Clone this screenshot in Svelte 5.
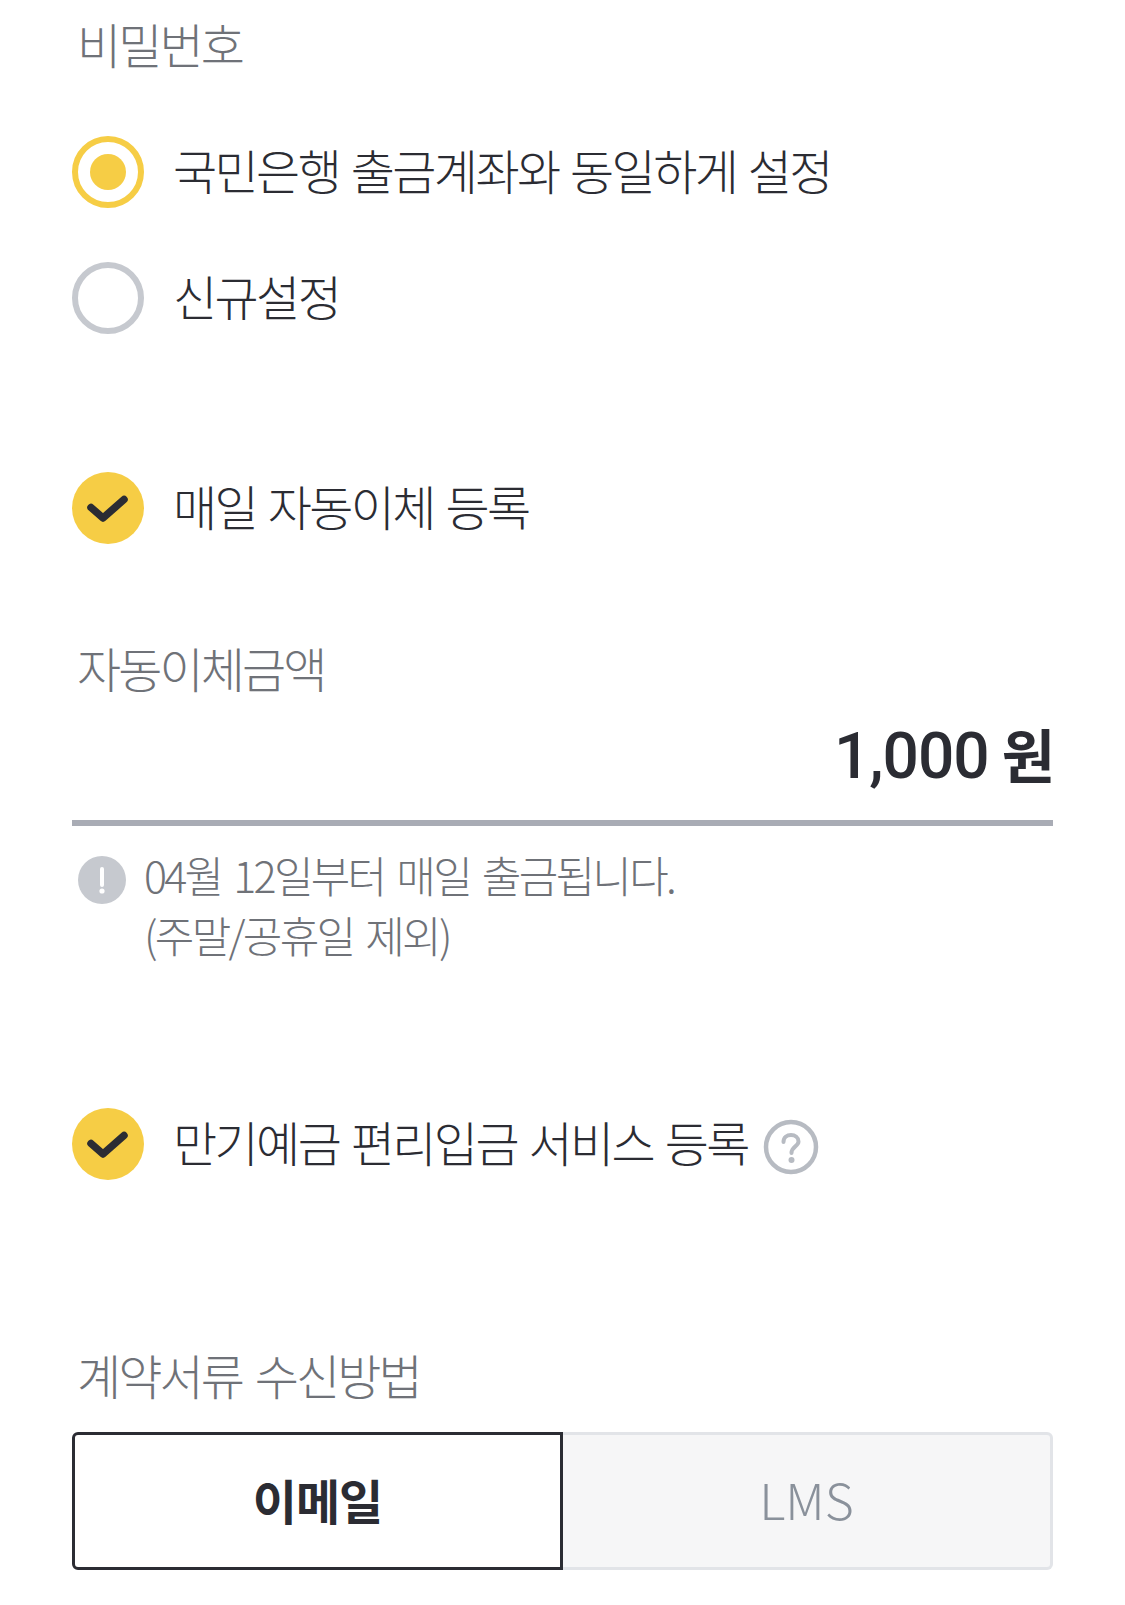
<script>
  const radios = [
    { label: '국민은행 출금계좌와 동일하게 설정', on: true },
    { label: '신규설정', on: false }
  ]
</script>

<div class="page">
  <div class="label pw">비밀번호</div>
  <div class="radios">
    {#each radios as r}
      <div class="row">
        <span class="radio" class:on={r.on}></span>
        <span class="text">{r.label}</span>
      </div>
    {/each}
  </div>

  <div class="row daily">
    <span class="check">
      <svg viewBox="0 0 72 72" width="72" height="72"><path d="M19 35.500 L31 46 L52 27.500" fill="none" stroke="#2b2c33" stroke-width="7.500" stroke-linecap="round" stroke-linejoin="round"/></svg>
    </span>
    <span class="text">매일 자동이체 등록</span>
  </div>

  <div class="label amount-label">자동이체금액</div>
  <div class="amount"><span class="value">1,000 <span class="unit">원</span></span></div>

  <div class="notice">
    <span class="info">
      <svg viewBox="0 0 48 48" width="48" height="48">
        <path d="M24 13 V29" fill="none" stroke="#fff" stroke-width="4" stroke-linecap="round"/>
        <circle cx="24" cy="35" r="2.600" fill="#fff"/>
      </svg>
    </span>
    <p>04월 12일부터 매일 출금됩니다.<br />(주말/공휴일 제외)</p>
  </div>

  <div class="row maturity">
    <span class="check">
      <svg viewBox="0 0 72 72" width="72" height="72"><path d="M19 35.500 L31 46 L52 27.500" fill="none" stroke="#2b2c33" stroke-width="7.500" stroke-linecap="round" stroke-linejoin="round"/></svg>
    </span>
    <span class="text">만기예금 편리입금 서비스 등록</span>
    <span class="help">
      <svg viewBox="0 0 56 56" width="56" height="56">
        <circle cx="28" cy="28" r="25" fill="none" stroke="#b7bbc2" stroke-width="4.500"/>
        <path d="M20.500 23 C20.500 18.500 24 16 28 16 C32 16 35.500 18.500 35.500 22.500 C35.500 27.500 28.500 27.500 28.500 34" fill="none" stroke="#b7bbc2" stroke-width="4" stroke-linecap="round"/>
        <circle cx="28.500" cy="41" r="3" fill="#b7bbc2"/>
      </svg>
    </span>
  </div>

  <div class="label doc-label">계약서류 수신방법</div>
  <div class="tabs">
    <div class="tab active">이메일</div>
    <div class="tab">LMS</div>
  </div>
</div>

<style>
  :global(body) {
    background: #fff;
    font-family: "Noto Sans CJK KR", "Noto Sans", sans-serif;
  }

  .page {
    width: 1125px;
    height: 1605px;
    overflow: hidden;
    box-sizing: border-box;
    padding: 0 72px;
    color: #2b2c33;
  }

  .label {
    font-size: 48px;
    font-weight: 300;
    line-height: 72px;
    letter-spacing: -2.9px;
    word-spacing: 5px;
    color: #6f7278;
    padding-left: 5px;
  }

  .pw {
    margin-top: 7px;
  }

  .radios {
    margin-top: 57px;
    display: flex;
    flex-direction: column;
    gap: 54px;
  }

  .row {
    display: flex;
    align-items: center;
    height: 72px;
  }

  .text {
    margin-left: 29px;
    margin-bottom: 6px;
    font-size: 48px;
    font-weight: 300;
    line-height: 72px;
    letter-spacing: -2.6px;
    word-spacing: 3.500px;
    white-space: nowrap;
  }

  .radio {
    width: 72px;
    height: 72px;
    box-sizing: border-box;
    border: 6px solid #c6c9cf;
    border-radius: 50%;
    display: grid;
    place-items: center;
    flex: none;
  }

  .radio.on {
    border-color: #f6cd45;
  }

  .radio.on::after {
    content: "";
    width: 36px;
    height: 36px;
    border-radius: 50%;
    background: #f6cd45;
  }

  .check {
    width: 72px;
    height: 72px;
    border-radius: 50%;
    background: #f6cd45;
    flex: none;
  }

  .check svg,
  .info svg,
  .help svg {
    display: block;
  }

  .daily {
    margin-top: 138px;
  }

  .amount-label {
    margin-top: 87px;
  }

  .amount {
    height: 99px;
    padding-top: 18px;
    border-bottom: 6px solid #a9acb5;
    text-align: right;
    font-family: Roboto, "Noto Sans CJK KR", sans-serif;
    font-size: 64px;
    font-weight: 500;
    letter-spacing: -1px;
    word-spacing: -2px;
    line-height: 72px;
  }

  .value {
    margin-right: -2px;
  }

  .unit {
    font-size: 58px;
    font-weight: 700;
    letter-spacing: 0;
  }

  .notice {
    display: flex;
    margin-top: 18px;
    padding-left: 6px;
  }

  .info {
    width: 48px;
    height: 48px;
    margin-top: 12px;
    border-radius: 50%;
    background: #c6c9cf;
    flex: none;
  }

  .notice p {
    margin: 0 0 0 18px;
    font-size: 43px;
    font-weight: 300;
    line-height: 60px;
    letter-spacing: -2.7px;
    word-spacing: 5px;
    color: #6f7278;
  }

  .maturity {
    margin-top: 144px;
  }

  .help {
    width: 56px;
    height: 56px;
    margin-left: 15px;
    margin-top: 6px;
    flex: none;
  }

  .doc-label {
    margin-top: 158px;
  }

  .tabs {
    display: flex;
    margin-top: 22px;
    height: 138px;
  }

  .tab {
    flex: 1;
    display: grid;
    place-items: center;
    box-sizing: border-box;
    padding-bottom: 6px;
    border: 3px solid #e2e4e8;
    border-left: 0;
    border-radius: 0 6px 6px 0;
    background: #f6f6f7;
    color: #8a919b;
    font-size: 50px;
    font-weight: 300;
  }

  .tab.active {
    flex: none;
    width: 491px;
    padding-bottom: 5px;
    border: 3px solid #2b2c33;
    border-radius: 6px 0 0 6px;
    background: #fff;
    color: #2b2c33;
    font-size: 48px;
    font-weight: 700;
    letter-spacing: -1px;
  }
</style>
